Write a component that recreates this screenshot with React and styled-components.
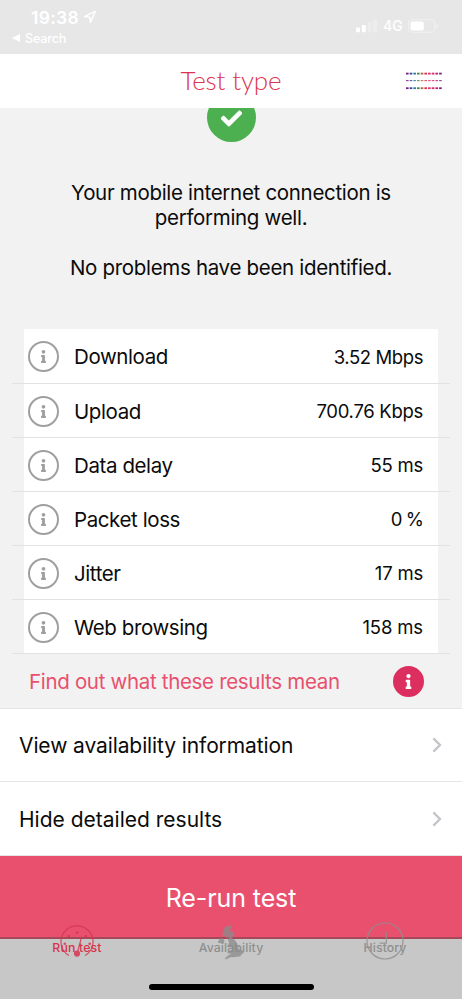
import React from "react";
import styled, { createGlobalStyle } from "styled-components";
import { FaCheck, FaInfo } from "react-icons/fa";

const results = [
  { label: "Download", value: "3.52 Mbps", spacing: -0.4 },
  { label: "Upload", value: "700.76 Kbps", spacing: -0.3 },
  { label: "Data delay", value: "55 ms", spacing: -0.25 },
  { label: "Packet loss", value: "0 %", spacing: -0.9 },
  { label: "Jitter", value: "17 ms", spacing: -0.2 },
  { label: "Web browsing", value: "158 ms", spacing: -0.15 },
];

const dashColors = [
  "#6f1f7c",
  "#3c4390",
  "#1f7fa0",
  "#3c8a4c",
  "#b0653a",
  "#d82f58",
  "#dc2f60",
  "#d82c6c",
  "#b3247a",
  "#7c1f7c",
];

const LocationIcon = () => (
  <svg width="14" height="14" viewBox="0 0 14 14" fill="none">
    <path
      d="M1.3 6.6 L12.3 1.4 L7.4 12.4 L6.7 7.1 Z"
      stroke="#fff"
      strokeWidth="1.4"
      strokeLinejoin="round"
    />
  </svg>
);

const SignalIcon = () => (
  <svg width="22" height="14" viewBox="0 0 22 14" fill="#fff">
    <rect x="0" y="8.6" width="4" height="4.7" rx="1" />
    <rect x="5.8" y="6" width="4" height="7.3" rx="1" />
    <rect x="11.6" y="3" width="4" height="10.3" rx="1" opacity="0.25" />
    <rect x="17" y="0.3" width="4" height="13" rx="1" opacity="0.25" />
  </svg>
);

const BatteryIcon = () => (
  <svg width="31" height="14" viewBox="0 0 31 14" fill="none">
    <rect
      x="0.7"
      y="0.7"
      width="26"
      height="12.6"
      rx="3.6"
      stroke="#fff"
      strokeOpacity="0.4"
      strokeWidth="1.1"
    />
    <rect x="2.6" y="2.5" width="13.2" height="9" rx="2" fill="#fff" />
    <path d="M28.2 4.7 C30.3 5.5 30.3 8.5 28.2 9.3 Z" fill="#fff" opacity="0.45" />
  </svg>
);

const MenuIcon = () => (
  <svg width="36" height="18" viewBox="0 0 36 18">
    {[0.7, 8, 15.3].map((y, row) =>
      dashColors.map((color, i) => (
        <rect
          key={`${row}-${i}`}
          x={i * 3.68}
          y={y}
          width="2.6"
          height={row === 1 ? 1.2 : 1.8}
          fill={color}
          opacity={row === 1 ? 0.8 : 1}
        />
      ))
    )}
  </svg>
);

const ChevronIcon = () => (
  <svg width="10" height="16" viewBox="0 0 10 16" fill="none">
    <path d="M1.4 1.4 L8 8 L1.4 14.6" stroke="#c4c4c9" strokeWidth="2.3" />
  </svg>
);

const GaugeIcon = () => (
  <svg width="34" height="33" viewBox="0 0 34 33" fill="none">
    <path d="M8.9 30.6 A16 16 0 1 1 25.1 30.6" stroke="#d8354c" strokeWidth="1.2" />
    <path d="M17 29 L21.6 12" stroke="#d8354c" strokeWidth="1.2" />
    <g fill="#d8354c">
      <circle cx="17" cy="28.6" r="3.1" />
      <circle cx="17.2" cy="7.5" r="1.3" />
      <circle cx="8.7" cy="11.3" r="1.3" />
      <circle cx="25.8" cy="11.3" r="1.3" />
      <circle cx="4.8" cy="18.8" r="1.3" />
      <circle cx="29.7" cy="18.8" r="1.3" />
    </g>
  </svg>
);

const BritainIcon = () => (
  <svg width="28" height="36" viewBox="186 68 84 108" fill="#8c8c8c" opacity="0.9">
    <path d="M228 70 L219 76 L213 75 L206 81 L207 87 L201 92 L205 98 L201 106 L211 103 L212 109 L222 108 L219 116 L222 122 L220 130 L216 133 L219 138 L232 138 L230 146 L219 150 L217 155 L229 158 L220 162 L209 172 L213 174 L226 168 L240 167 L258 165 L257 161 L266 155 L265 148 L252 144 L250 137 L245 124 L239 115 L231 110 L238 100 L237 91 L224 88 L230 78 Z" />
    <path d="M189 121 L194 112 L202 110 L208 117 L207 125 L198 126 L189 124 Z" />
  </svg>
);

const ClockIcon = () => (
  <svg width="38" height="38" viewBox="0 0 38 38" fill="none">
    <circle cx="19" cy="19" r="18" stroke="#8f8f8f" strokeWidth="1.2" />
    <path d="M20.3 10 V21.2 H13.6" stroke="#8f8f8f" strokeWidth="1.2" />
  </svg>
);

const tabs = [
  { label: "Run test", icon: <GaugeIcon />, color: "#d8354c", top: -14, spacing: 0.15 },
  { label: "Availability", icon: <BritainIcon />, color: "#8f8f8f", top: -15, spacing: 0.1 },
  { label: "History", icon: <ClockIcon />, color: "#8f8f8f", top: -17, spacing: 0.1 },
];

const App = () => {
  return (
    <Screen>
      <GlobalStyle />
      <StatusBar>
        <StatusLeft>
          <ClockRow>
            <Time>19:38</Time>
            <LocationIcon />
          </ClockRow>
          <BackLink>
            <BackArrow />
            Search
          </BackLink>
        </StatusLeft>
        <StatusRight>
          <SignalIcon />
          <Network>4G</Network>
          <BatteryIcon />
        </StatusRight>
      </StatusBar>

      <Header>
        <Title>Test type</Title>
        <MenuButton>
          <MenuIcon />
        </MenuButton>
      </Header>

      <Summary>
        <CheckBadge>
          <FaCheck size={21} />
        </CheckBadge>
        <Message>
          Your mobile internet connection is
          <br />
          performing well.
        </Message>
        <Message>No problems have been identified.</Message>
      </Summary>

      <ResultList>
        {results.map((item) => (
          <ResultRow key={item.label}>
            <ResultContent>
              <InfoCircle>
                <FaInfo size={13} />
              </InfoCircle>
              <ResultLabel>{item.label}</ResultLabel>
              <ResultValue $spacing={item.spacing}>{item.value}</ResultValue>
            </ResultContent>
          </ResultRow>
        ))}
      </ResultList>

      <FindOut>
        <FindOutText>Find out what these results mean</FindOutText>
        <InfoCircle $filled>
          <FaInfo size={15} />
        </InfoCircle>
      </FindOut>

      <LinkRow>
        <LinkText $spacing={-0.1}>View availability information</LinkText>
        <ChevronIcon />
      </LinkRow>
      <LinkRow>
        <LinkText $spacing={0}>Hide detailed results</LinkText>
        <ChevronIcon />
      </LinkRow>

      <RerunButton>Re-run test</RerunButton>

      <TabBar>
        {tabs.map((tab) => (
          <Tab key={tab.label} $color={tab.color} $spacing={tab.spacing}>
            <TabIcon $top={tab.top}>{tab.icon}</TabIcon>
            {tab.label}
          </Tab>
        ))}
      </TabBar>
      <HomeArea>
        <HomeIndicator />
      </HomeArea>
    </Screen>
  );
};

export default App;

const GlobalStyle = createGlobalStyle`
  * {
    box-sizing: border-box;
  }
  body {
    margin: 0;
    overflow: hidden;
  }
  svg {
    display: block;
    flex-shrink: 0;
  }
`;

const Screen = styled.div`
  width: 462px;
  height: 999px;
  display: flex;
  flex-direction: column;
  overflow: hidden;
  background: #f2f2f2;
  color: #0b0b0b;
  font-family: Inter, "Liberation Sans", sans-serif;
`;

const StatusBar = styled.div`
  height: 54px;
  flex-shrink: 0;
  display: flex;
  justify-content: space-between;
  background: #e7e7e7;
  color: #fff;
`;

const StatusLeft = styled.div`
  padding: 7px 0 0 12px;
`;

const ClockRow = styled.div`
  display: flex;
  align-items: center;
  gap: 4px;
  height: 20px;
  padding-left: 19px;
`;

const Time = styled.span`
  font-size: 17.5px;
  font-weight: 600;
  letter-spacing: 0.3px;
`;

const BackLink = styled.div`
  display: flex;
  align-items: center;
  gap: 5px;
  height: 22px;
  font-size: 12.5px;
  font-weight: 500;
  letter-spacing: -0.15px;
`;

const BackArrow = styled.span`
  border-top: 4px solid transparent;
  border-bottom: 4px solid transparent;
  border-right: 8px solid #fff;
`;

const StatusRight = styled.div`
  display: flex;
  align-items: center;
  height: 51px;
  padding-right: 23px;
`;

const Network = styled.span`
  width: 30px;
  padding-left: 5px;
  font-size: 14px;
  font-weight: 500;
`;

const Header = styled.header`
  height: 54px;
  flex-shrink: 0;
  display: grid;
  grid-template-columns: 1fr auto 1fr;
  align-items: center;
  padding: 0 20px;
  background: #fff;
`;

const Title = styled.h1`
  grid-column: 2;
  margin: 0;
  padding-bottom: 3px;
  color: #dc3450;
  font-family: Lato, sans-serif;
  font-size: 26px;
  font-weight: 300;
  line-height: 50px;
  letter-spacing: -0.15px;
`;

const MenuButton = styled.button`
  justify-self: end;
  padding: 0;
  border: 0;
  background: none;
`;

const Summary = styled.section`
  height: 221px;
  flex-shrink: 0;
  display: flex;
  flex-direction: column;
  align-items: center;
  overflow: hidden;
`;

const CheckBadge = styled.div`
  width: 49px;
  height: 49px;
  flex-shrink: 0;
  display: flex;
  align-items: center;
  justify-content: center;
  margin: -15px 0 38px;
  padding: 2px 0 0 1px;
  border-radius: 50%;
  background: #4caf50;
  color: #fff;

  path {
    stroke: #fff;
    stroke-width: 14px;
  }
`;

const Message = styled.p`
  margin: 0 0 25px;
  font-size: 20.5px;
  line-height: 25px;
  letter-spacing: -0.31px;
  text-align: center;
  white-space: nowrap;
`;

const ResultList = styled.ul`
  margin: 0 12px;
  padding: 0;
  list-style: none;
`;

const ResultRow = styled.li`
  height: 54px;
  padding: 0 12px;
  border-bottom: 1px solid #e2e2e2;

  &:first-child {
    height: 55px;
  }
`;

const ResultContent = styled.div`
  display: flex;
  align-items: center;
  height: 100%;
  padding: 1px 15px 0 4px;
  background: #fff;
`;

const InfoCircle = styled.span`
  width: 31px;
  height: 31px;
  flex-shrink: 0;
  display: flex;
  align-items: center;
  justify-content: center;
  border: 2px solid ${({ $filled }) => ($filled ? "#dc2f60" : "#9f9f9f")};
  border-radius: 50%;
  background: ${({ $filled }) => ($filled ? "#dc2f60" : "transparent")};
  color: ${({ $filled }) => ($filled ? "#fff" : "#9f9f9f")};
`;

const ResultLabel = styled.span`
  flex: 1;
  margin-left: 15px;
  font-size: 20.5px;
  letter-spacing: -0.4px;
`;

const ResultValue = styled.span`
  font-size: 18.5px;
  letter-spacing: ${({ $spacing }) => $spacing}px;
`;

const FindOut = styled.div`
  height: 55px;
  flex-shrink: 0;
  display: flex;
  align-items: center;
  justify-content: space-between;
  padding: 0 38px 0 29px;
  border-bottom: 1px solid #e6e6e6;
`;

const FindOutText = styled.span`
  color: #e8506e;
  font-size: 20.5px;
  letter-spacing: -0.32px;
`;

const LinkRow = styled.div`
  height: 73px;
  flex-shrink: 0;
  display: flex;
  align-items: center;
  justify-content: space-between;
  padding: 0 20px 0 19px;
  border-bottom: 1px solid #e6e6e6;
  background: #fff;

  & + & {
    height: 74px;
    padding-top: 1px;
  }
`;

const LinkText = styled.span`
  font-size: 21px;
  letter-spacing: ${({ $spacing }) => $spacing}px;
`;

const RerunButton = styled.button`
  height: 81px;
  flex-shrink: 0;
  padding: 3px 0 0;
  border: 0;
  background: #e8506e;
  color: #fff;
  font-family: inherit;
  font-size: 25px;
  letter-spacing: -0.1px;
`;

const TabBar = styled.nav`
  height: 34px;
  flex-shrink: 0;
  display: grid;
  grid-template-columns: repeat(3, 1fr);
  border-top: 2px solid #a7485a;
  background: #c7c7c7;
`;

const Tab = styled.div`
  position: relative;
  color: ${({ $color }) => $color};
  font-size: 12.3px;
  font-weight: 500;
  line-height: 18px;
  letter-spacing: ${({ $spacing }) => $spacing}px;
  text-align: center;
`;

/* icons sit across the top edge of the bar, over their labels */
const TabIcon = styled.span`
  position: absolute;
  top: ${({ $top }) => $top}px;
  left: 0;
  right: 0;
  display: flex;
  justify-content: center;
  opacity: 0.85;
`;

const HomeArea = styled.div`
  flex: 1;
  display: flex;
  justify-content: center;
  padding-top: 13px;
  background: #c7c7c7;
`;

const HomeIndicator = styled.div`
  width: 165px;
  height: 6px;
  border-radius: 3px;
  background: #000;
`;
